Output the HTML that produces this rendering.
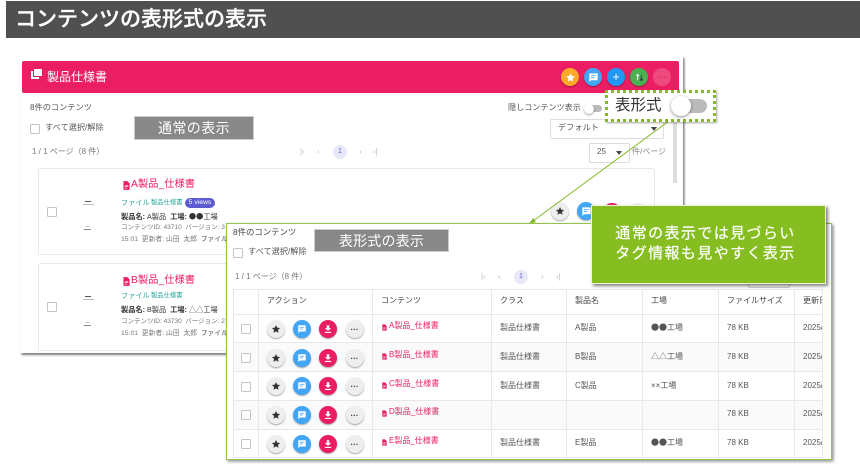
<!DOCTYPE html>
<html lang="ja">
<head>
<meta charset="utf-8">
<title>コンテンツの表形式の表示</title>
<style>
html,body{margin:0;padding:0;background:#fff}
body{width:860px;height:466px;position:relative;overflow:hidden;font-family:"Liberation Sans","Noto Sans CJK JP",sans-serif;color:#555;filter:blur(.3px)}
.a,.t{position:absolute}
.t{white-space:nowrap;line-height:12px;font-size:8px;transform:translateY(-6px)}
.cb{position:absolute;width:8px;height:8px;border:1px solid #c4c4c4;border-radius:1.5px;background:#fff}
.lab{position:absolute;background:#888;color:#fff;border:1px solid #ccc;box-sizing:border-box;display:flex;align-items:center;justify-content:center;font-size:14px;letter-spacing:.4px}
.c{position:absolute;border-radius:50%;box-shadow:0 1px 1.5px rgba(0,0,0,.35);width:18px;height:18px;display:flex;align-items:center;justify-content:center}
.c svg{display:block}
.g{background:#eee}.b{background:#42a5f5}.r{background:#ec1e63}
.p{color:#ec1e63}
.tl{color:#26a69a}
.hl{position:absolute;height:1px;background:#e8e8e8;left:233px;width:590px}
.vl{position:absolute;width:1px;background:#e8e8e8;top:289px;height:170px}
.pg{color:#bbb;font-size:8px}
.doc{position:absolute;fill:#ec1e63}
.j{font-family:"Noto Sans CJK JP",sans-serif}
</style>
</head>
<body>
<svg width="0" height="0" style="position:absolute">
<symbol id="star" viewBox="0 0 24 24"><path d="M12 2.500l2.900 6.300 6.900.8-5.100 4.700 1.400 6.800-6.100-3.400-6.100 3.400 1.400-6.800-5.100-4.700 6.900-.8z"/></symbol>
<symbol id="chat" viewBox="0 0 24 24"><path d="M3 3h18v15H7l-4 4zM6.500 7v1.800h11V7zM6.500 11v1.800h7.500V11z" fill-rule="evenodd"/></symbol>
<symbol id="dl" viewBox="0 0 24 24"><path d="M9 3h6v7h4.500L12 16.500 4.500 10H9zM4.500 19h15v2.500h-15z"/></symbol>
<symbol id="doc" viewBox="0 0 16 20"><path fill-rule="evenodd" d="M1 0h9l5 5v15H1zM4 9v1.500h8V9zM4 12v1.500h8V12zM4 15v1.500h5V15z"/></symbol>
</svg>

<!-- title bar -->
<div class="a" style="left:6px;top:1px;width:854px;height:37px;background:#505050"></div>
<div class="a" style="left:15px;top:2px;height:36px;line-height:35px;font-size:21px;font-weight:500;color:#fff;white-space:nowrap;-webkit-text-stroke:.3px #fff">コンテンツの表形式の表示</div>

<!-- main panel -->
<div class="a" style="left:20px;top:56px;width:663px;height:297px;background:#fff;box-shadow:1.500px 2px 2px rgba(0,0,0,.5)"></div>
<div class="a" style="left:22px;top:61px;width:657px;height:32px;background:#ec1e63;border-radius:2px"></div>
<svg class="a" style="left:31px;top:69px" width="11" height="11" viewBox="0 0 11 11"><path d="M3 0h8v7H3z" fill="#fff"/><path d="M0 2h2v6h6v2H0z" fill="#fff"/></svg>
<div class="t" style="left:47px;top:77px;font-size:12px;color:#fff">製品仕様書</div>

<div class="c" style="left:561px;top:68px;background:#ffa726"><svg width="11" height="11" fill="#fff"><use href="#star"/></svg></div>
<div class="c" style="left:584px;top:68px;background:#42a5f5"><svg width="11" height="11" fill="#fff"><use href="#chat"/></svg></div>
<div class="c" style="left:607px;top:68px;background:#2196f3;color:#fff;font-size:13px;line-height:18px">+</div>
<div class="c" style="left:630px;top:68px;background:#4caf50"><svg width="9" height="9" viewBox="0 0 10 10"><path d="M3 8V2M1.500 3.500L3 1.500l1.500 2" stroke="#fff" stroke-width="1" fill="none"/><path d="M7 2v6M5.500 6.500L7 8.500l1.500-2" stroke="#333" stroke-width="1" fill="none"/></svg></div>
<div class="c" style="left:653px;top:68px;background:#ef4a7e;box-shadow:none;color:#c2305f;font-size:8px;font-weight:bold">···</div>

<div class="t" style="left:30px;top:108px;font-size:8.200px">8件のコンテンツ</div>
<div class="cb" style="left:30px;top:124px"></div>
<div class="t" style="left:45px;top:128px;font-size:8.200px">すべて選択/解除</div>
<div class="lab" style="left:134px;top:116px;width:120px;height:24px">通常の表示</div>
<div class="t" style="left:32px;top:152px;color:#777">1 / 1 ページ（8 件）</div>
<div class="t pg" style="left:300px;top:152px">|‹</div>
<div class="t pg" style="left:317px;top:152px">‹</div>
<div class="a" style="left:333px;top:145px;width:14px;height:14px;border-radius:50%;background:#e8e8f8;color:#5c5bcf;font-size:7px;line-height:14px;text-align:center">1</div>
<div class="t pg" style="left:359px;top:152px">›</div>
<div class="t pg" style="left:373px;top:152px">›|</div>

<div class="t" style="left:508px;top:108px;font-size:8.100px">隠しコンテンツ表示</div>
<div class="a" style="left:586px;top:105px;width:16px;height:7px;border-radius:4px;background:#bbb"></div>
<div class="a" style="left:584px;top:104px;width:10px;height:10px;border-radius:50%;background:#fff;box-shadow:0 1px 2px rgba(0,0,0,.4)"></div>
<div class="a" style="left:550px;top:119px;width:112px;height:18px;border:1px solid #ddd;border-radius:2px"></div>
<div class="t" style="left:558px;top:128px;font-size:8.200px">デフォルト</div>
<div class="a" style="left:651px;top:127px;border:3px solid transparent;border-top:4px solid #444"></div>
<div class="a" style="left:589px;top:143px;width:39px;height:18px;border:1px solid #ddd;border-radius:2px"></div>
<div class="t" style="left:597px;top:152px">25</div>
<div class="a" style="left:616px;top:151px;border:3px solid transparent;border-top:4px solid #444"></div>
<div class="t" style="left:632px;top:152px;color:#888">件/ページ</div>
<div class="a" style="left:673px;top:122px;width:4px;height:61px;background:#ddd"></div>

<!-- card 1 -->
<div class="a" style="left:38px;top:168px;width:617px;height:87px;border:1px solid #e8e8e8;border-radius:3px;box-sizing:border-box"></div>
<div class="cb" style="left:47px;top:207px"></div>
<div class="a" style="left:85px;top:201px;width:6px;height:1px;background:#555"></div>
<div class="a" style="left:83px;top:204px;width:11px;height:1px;background:#bbb"></div>
<div class="a" style="left:85px;top:226px;width:5px;height:1px;background:#ccc"></div>
<div class="a" style="left:84px;top:229px;width:7px;height:1px;background:#888"></div>
<svg class="doc" style="left:123px;top:181px" width="7" height="9"><use href="#doc"/></svg>
<div class="t p" style="left:131px;top:185px;font-size:10.300px">A製品_仕様書</div>
<div class="t tl" style="left:121px;top:203px;font-size:7.200px">ファイル</div>
<div class="t tl" style="left:151px;top:203px;font-size:6.300px">製品仕様書</div>
<div class="a" style="left:185px;top:198px;width:30px;height:10px;border-radius:5px;background:#5c5bcf;color:#fff;font-size:6.800px;line-height:10px;text-align:center">5 views</div>
<div class="t" style="left:121px;top:217px;color:#333;font-size:7.200px"><b>製品名:</b> A製品 &nbsp;<b>工場:</b> <span class="j">●●</span>工場</div>
<div class="t" style="left:121px;top:228px;color:#777;font-size:6.500px">コンテンツID: 43710 &nbsp;バージョン: 3</div>
<div class="t" style="left:121px;top:240px;color:#777;font-size:6.800px">15:01 &nbsp;更新者: 山田 &nbsp;太郎 &nbsp;<span style="color:#444">ファイルサ</span></div>
<div class="c g" style="left:551px;top:202px"><svg width="10" height="10" fill="#333"><use href="#star"/></svg></div>
<div class="c b" style="left:577px;top:202px"><svg width="11" height="11" fill="#fff"><use href="#chat"/></svg></div>
<div class="c r" style="left:603px;top:203px"></div>
<div class="c g" style="left:629px;top:203px"></div>

<!-- card 2 -->
<div class="a" style="left:38px;top:263px;width:617px;height:88px;border:1px solid #e8e8e8;border-radius:3px;box-sizing:border-box"></div>
<div class="cb" style="left:47px;top:302px"></div>
<div class="a" style="left:85px;top:296px;width:6px;height:1px;background:#555"></div>
<div class="a" style="left:83px;top:299px;width:11px;height:1px;background:#bbb"></div>
<div class="a" style="left:85px;top:322px;width:5px;height:1px;background:#ccc"></div>
<div class="a" style="left:84px;top:325px;width:7px;height:1px;background:#888"></div>
<svg class="doc" style="left:123px;top:277px" width="7" height="9"><use href="#doc"/></svg>
<div class="t p" style="left:131px;top:281px;font-size:10.300px">B製品_仕様書</div>
<div class="t tl" style="left:121px;top:296px;font-size:7.200px">ファイル</div>
<div class="t tl" style="left:151px;top:296px;font-size:6.300px">製品仕様書</div>
<div class="t" style="left:121px;top:310px;color:#333;font-size:7.200px"><b>製品名:</b> B製品 &nbsp;<b>工場:</b> △△工場</div>
<div class="t" style="left:121px;top:322px;color:#777;font-size:6.500px">コンテンツID: 43730 &nbsp;バージョン: 2</div>
<div class="t" style="left:121px;top:334px;color:#777;font-size:6.800px">15:01 &nbsp;更新者: 山田 &nbsp;太郎 &nbsp;<span style="color:#444">ファイルサ</span></div>

<!-- table panel -->
<div class="a" style="left:226px;top:223px;width:606px;height:237px;box-sizing:border-box;background:#fff;border:1px solid #96c24a;border-width:1px 1.500px 1.500px 1.500px;box-shadow:1.500px 1.500px 3px rgba(0,0,0,.45)"></div>
<div class="t" style="left:233px;top:232px;font-size:8.400px;color:#444">8件のコンテンツ</div>
<div class="cb" style="left:233px;top:248px"></div>
<div class="t" style="left:248px;top:252px;font-size:8.200px">すべて選択/解除</div>
<div class="lab" style="left:314px;top:229px;width:135px;height:23px;letter-spacing:.2px">表形式の表示</div>
<div class="t" style="left:235px;top:277px;color:#777">1 / 1 ページ（8 件）</div>
<div class="t pg" style="left:481px;top:277px">|‹</div>
<div class="t pg" style="left:498px;top:277px">‹</div>
<div class="a" style="left:514px;top:270px;width:14px;height:14px;border-radius:50%;background:#e8e8f8;color:#5c5bcf;font-size:7px;line-height:14px;text-align:center">1</div>
<div class="t pg" style="left:541px;top:277px">›</div>
<div class="t pg" style="left:556px;top:277px">›|</div>
<div class="a" style="left:748px;top:276px;width:40px;height:10px;border:1px solid #ccc;border-radius:2px"></div>

<!-- table stripes and lines -->
<div class="a" style="left:233px;top:342px;width:590px;height:29px;background:#fafafa"></div>
<div class="a" style="left:233px;top:400px;width:590px;height:29px;background:#fafafa"></div>
<div class="hl" style="top:289px"></div>
<div class="hl" style="top:314px"></div>
<div class="hl" style="top:342px"></div>
<div class="hl" style="top:371px"></div>
<div class="hl" style="top:400px"></div>
<div class="hl" style="top:429px"></div>
<div class="hl" style="top:457px"></div>
<div class="vl" style="left:233px"></div>
<div class="vl" style="left:258px"></div>
<div class="vl" style="left:372px"></div>
<div class="vl" style="left:491px"></div>
<div class="vl" style="left:566px"></div>
<div class="vl" style="left:642px"></div>
<div class="vl" style="left:718px"></div>
<div class="vl" style="left:794px"></div>
<div class="vl" style="left:822px"></div>

<!-- header -->
<div class="t" style="left:267px;top:301px;color:#444">アクション</div>
<div class="t" style="left:381px;top:301px;color:#444">コンテンツ</div>
<div class="t" style="left:500px;top:301px;color:#444">クラス</div>
<div class="t" style="left:575px;top:301px;color:#444">製品名</div>
<div class="t" style="left:651px;top:301px;color:#444">工場</div>
<div class="t" style="left:727px;top:301px;color:#444">ファイルサイズ</div>
<div class="a" style="left:803px;top:295px;width:19px;height:12px;overflow:hidden;white-space:nowrap;font-size:8px;line-height:12px;color:#444">更新日時</div>

<!-- row 1 -->
<div class="cb" style="left:241px;top:324px"></div>
<div class="c g" style="left:266.500px;top:320px"><svg width="10" height="10" fill="#333"><use href="#star"/></svg></div>
<div class="c b" style="left:293px;top:320px"><svg width="10" height="10" fill="#fff"><use href="#chat"/></svg></div>
<div class="c r" style="left:319px;top:320px"><svg width="10" height="10" fill="#fff"><use href="#dl"/></svg></div>
<div class="c g" style="left:345.500px;top:320px;font-size:8px;font-weight:bold;color:#333">···</div>
<svg class="doc" style="left:382px;top:324px" width="5" height="7"><use href="#doc"/></svg>
<div class="t p" style="left:389px;top:326px">A製品_仕様書</div>
<div class="t" style="left:500px;top:328px">製品仕様書</div>
<div class="t" style="left:575px;top:328px">A製品</div>
<div class="t" style="left:651px;top:328px"><span class="j">●●</span>工場</div>
<div class="t" style="left:727px;top:328px">78 KB</div>
<div class="a" style="left:803px;top:322px;width:19px;height:12px;overflow:hidden;font-size:8px;line-height:12px">2025/</div>

<!-- row 2 -->
<div class="cb" style="left:241px;top:353px"></div>
<div class="c g" style="left:266.500px;top:349px"><svg width="10" height="10" fill="#333"><use href="#star"/></svg></div>
<div class="c b" style="left:293px;top:349px"><svg width="10" height="10" fill="#fff"><use href="#chat"/></svg></div>
<div class="c r" style="left:319px;top:349px"><svg width="10" height="10" fill="#fff"><use href="#dl"/></svg></div>
<div class="c g" style="left:345.500px;top:349px;font-size:8px;font-weight:bold;color:#333">···</div>
<svg class="doc" style="left:382px;top:353px" width="5" height="7"><use href="#doc"/></svg>
<div class="t p" style="left:389px;top:355px">B製品_仕様書</div>
<div class="t" style="left:500px;top:357px">製品仕様書</div>
<div class="t" style="left:575px;top:357px">B製品</div>
<div class="t" style="left:651px;top:357px">△△工場</div>
<div class="t" style="left:727px;top:357px">78 KB</div>
<div class="a" style="left:803px;top:351px;width:19px;height:12px;overflow:hidden;font-size:8px;line-height:12px">2025/</div>

<!-- row 3 -->
<div class="cb" style="left:241px;top:382px"></div>
<div class="c g" style="left:266.500px;top:377px"><svg width="10" height="10" fill="#333"><use href="#star"/></svg></div>
<div class="c b" style="left:293px;top:377px"><svg width="10" height="10" fill="#fff"><use href="#chat"/></svg></div>
<div class="c r" style="left:319px;top:377px"><svg width="10" height="10" fill="#fff"><use href="#dl"/></svg></div>
<div class="c g" style="left:345.500px;top:377px;font-size:8px;font-weight:bold;color:#333">···</div>
<svg class="doc" style="left:382px;top:382px" width="5" height="7"><use href="#doc"/></svg>
<div class="t p" style="left:389px;top:384px">C製品_仕様書</div>
<div class="t" style="left:500px;top:386px">製品仕様書</div>
<div class="t" style="left:575px;top:386px">C製品</div>
<div class="t" style="left:651px;top:386px">××工場</div>
<div class="t" style="left:727px;top:386px">78 KB</div>
<div class="a" style="left:803px;top:380px;width:19px;height:12px;overflow:hidden;font-size:8px;line-height:12px">2025/</div>

<!-- row 4 -->
<div class="cb" style="left:241px;top:410px"></div>
<div class="c g" style="left:266.500px;top:406px"><svg width="10" height="10" fill="#333"><use href="#star"/></svg></div>
<div class="c b" style="left:293px;top:406px"><svg width="10" height="10" fill="#fff"><use href="#chat"/></svg></div>
<div class="c r" style="left:319px;top:406px"><svg width="10" height="10" fill="#fff"><use href="#dl"/></svg></div>
<div class="c g" style="left:345.500px;top:406px;font-size:8px;font-weight:bold;color:#333">···</div>
<svg class="doc" style="left:382px;top:410px" width="5" height="7"><use href="#doc"/></svg>
<div class="t p" style="left:389px;top:412px">D製品_仕様書</div>
<div class="t" style="left:727px;top:414px">78 KB</div>
<div class="a" style="left:803px;top:408px;width:19px;height:12px;overflow:hidden;font-size:8px;line-height:12px">2025/</div>

<!-- row 5 -->
<div class="cb" style="left:241px;top:439px"></div>
<div class="c g" style="left:266.500px;top:435px"><svg width="10" height="10" fill="#333"><use href="#star"/></svg></div>
<div class="c b" style="left:293px;top:435px"><svg width="10" height="10" fill="#fff"><use href="#chat"/></svg></div>
<div class="c r" style="left:319px;top:435px"><svg width="10" height="10" fill="#fff"><use href="#dl"/></svg></div>
<div class="c g" style="left:345.500px;top:435px;font-size:8px;font-weight:bold;color:#333">···</div>
<svg class="doc" style="left:382px;top:439px" width="5" height="7"><use href="#doc"/></svg>
<div class="t p" style="left:389px;top:441px">E製品_仕様書</div>
<div class="t" style="left:500px;top:443px">製品仕様書</div>
<div class="t" style="left:575px;top:443px">E製品</div>
<div class="t" style="left:651px;top:443px"><span class="j">●●</span>工場</div>
<div class="t" style="left:727px;top:443px">78 KB</div>
<div class="a" style="left:803px;top:437px;width:19px;height:12px;overflow:hidden;font-size:8px;line-height:12px">2025/</div>

<!-- connector -->
<svg class="a" style="left:0;top:0" width="860" height="466"><line x1="669" y1="121" x2="533" y2="221" stroke="#85b82a" stroke-width="1"/><path d="M529 224l4-6 3 4z" fill="#85b82a"/></svg>

<!-- green callout -->
<div class="a" style="left:591px;top:205px;width:235px;height:79px;box-sizing:border-box;background:#86be22;border:1.500px solid #eef3e0;box-shadow:2px 2px 3px rgba(0,0,0,.5)"></div>
<div class="a" style="left:588px;top:224px;width:235px;text-align:center;color:#fff;font-size:15px;line-height:20px;letter-spacing:1.400px;white-space:nowrap;-webkit-text-stroke:.2px #fff">通常の表示では見づらい<br>タグ情報も見やすく表示</div>

<!-- toggle callout -->
<div class="a" style="left:605px;top:90px;width:111px;height:32px;box-sizing:border-box;background:#fff;border:3px dotted #85b82a;box-shadow:1px 1px 2px rgba(0,0,0,.35)"></div>
<div class="t" style="left:615px;top:106px;font-size:15.500px;line-height:20px;transform:translateY(-10px);color:#333">表形式</div>
<div class="a" style="left:674px;top:99px;width:33px;height:14px;border-radius:7px;background:#bbb"></div>
<div class="a" style="left:671px;top:96px;width:20px;height:20px;border-radius:50%;background:#fff;box-shadow:0 1px 3px rgba(0,0,0,.45)"></div>
</body>
</html>
